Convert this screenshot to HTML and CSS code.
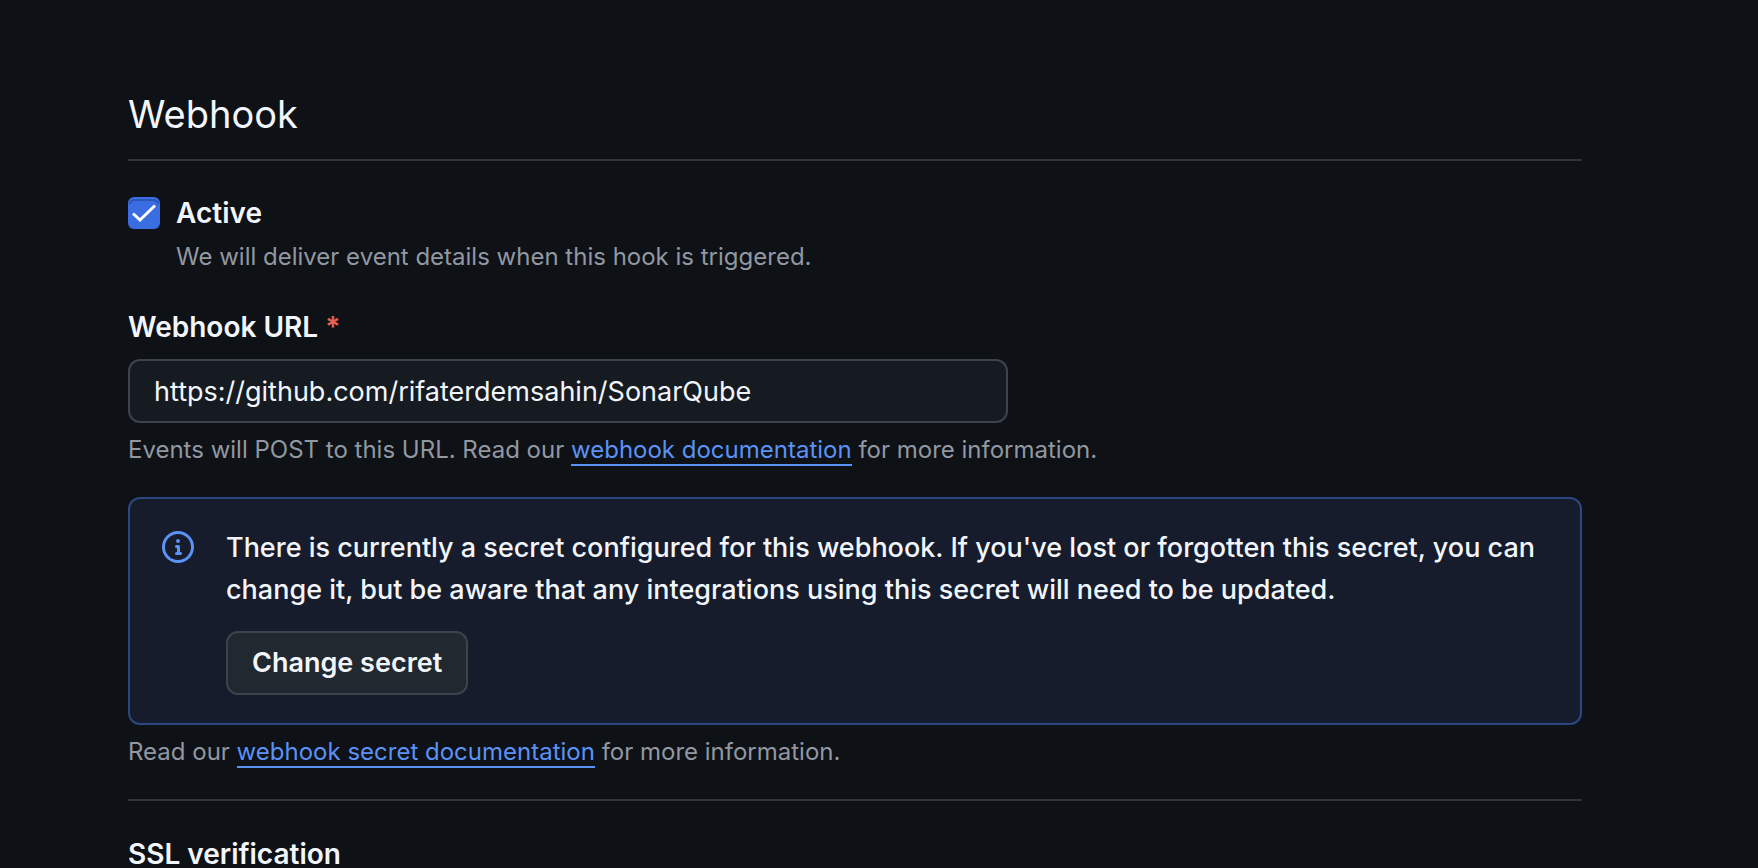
FILE: index.html
```html
<!DOCTYPE html>
<html lang="en">
<head>
<meta charset="utf-8">
<title>Webhook</title>
<link rel="stylesheet" href="styles.css">
</head>
<body>
<main class="settings">
  <h2 class="heading">Webhook</h2>
  <form class="form">
    <div class="check-row">
      <input class="checkbox" type="checkbox" id="active" checked aria-describedby="active-note">
      <div class="check-text">
        <label class="label" for="active">Active</label>
        <p class="note" id="active-note">We will deliver event details when this hook is triggered.</p>
      </div>
    </div>
    <div class="field">
      <label class="label" for="url">Webhook URL <span class="required">*</span></label>
      <input class="text-input" type="text" id="url" value="https://github.com/rifaterdemsahin/SonarQube" aria-describedby="url-note">
      <p class="note" id="url-note">Events will POST to this URL. Read our <a class="link" href="#">webhook documentation</a> for more information.</p>
    </div>
    <div class="secret">
      <div class="banner">
        <svg class="banner-icon" viewBox="0 0 16 16" aria-hidden="true"><path fill="currentColor" d="M0 8a8 8 0 1 1 16 0A8 8 0 0 1 0 8Zm8-6.500a6.500 6.500 0 1 0 0 13 6.500 6.500 0 0 0 0-13ZM6.500 7.750A.75.75 0 0 1 7.250 7h1a.75.75 0 0 1 .75.75v2.750h.25a.75.75 0 0 1 0 1.500h-2a.75.75 0 0 1 0-1.500h.25v-2h-.25a.75.75 0 0 1-.75-.75ZM8 6a1 1 0 1 1 0-2 1 1 0 0 1 0 2Z"/></svg>
        <div class="banner-body">
          <p class="banner-text">There is currently a secret configured for this webhook. If you've lost or forgotten this secret, you can change it, but be aware that any integrations using this secret will need to be updated.</p>
          <button class="button" type="button">Change secret</button>
        </div>
      </div>
      <p class="note">Read our <a class="link" href="#">webhook secret documentation</a> for more information.</p>
    </div>
    <section class="ssl">
      <h3 class="label">SSL verification</h3>
    </section>
  </form>
</main>
</body>
</html>
```
FILE: styles.css
```css
* {
  box-sizing: border-box;
}

html {
  background: #0e1116;
}

body {
  margin: 0;
  height: 100vh;
  overflow: hidden;
  color: #f2f6fc;
  font-family: Inter, "Noto Sans", sans-serif;
  font-size: 27px;
  line-height: 42px;
}

h2,
h3,
p {
  margin: 0;
}

.settings {
  padding: 84px 176px 0 128px;
}

.heading {
  padding-bottom: 15px;
  border-bottom: 2px solid #30353b;
  font-size: 38px;
  font-weight: 400;
  line-height: 60px;
}

.form {
  display: flex;
  flex-direction: column;
}

.check-row {
  display: flex;
  gap: 16px;
  margin-top: 32px;
}

.check-text,
.field {
  display: flex;
  flex-direction: column;
  align-items: flex-start;
}

.checkbox {
  appearance: none;
  flex: none;
  width: 32px;
  height: 32px;
  margin: 4px 0 0;
  border-radius: 6px;
  background: #3a6de2 url("data:image/svg+xml,%3Csvg xmlns='http://www.w3.org/2000/svg' viewBox='0 0 32 32'%3E%3Cpath d='M2 7Q2.500 3 7 3H25Q29.500 3 30 7' fill='none' stroke='%232c55b4' stroke-width='2'/%3E%3Cpath d='M5 16.500 12 23 27 8.500' fill='none' stroke='white' stroke-width='3'/%3E%3C/svg%3E") center / 100%;
}

.label {
  font-size: 28px;
  font-weight: 600;
  line-height: 40px;
}

.note {
  color: #9198a1;
  font-size: 24px;
  line-height: 36px;
}

.check-text .note {
  margin-top: 6px;
}

.field {
  margin-top: 32px;
}

.required {
  color: #ea6153;
}

.text-input {
  width: 880px;
  max-width: 100%;
  height: 64px;
  margin: 12px 0 9px;
  padding: 0 24px;
  border: 2px solid #3d434b;
  border-radius: 12px;
  background: #161b22;
  color: inherit;
  font: inherit;
}

.link {
  border-bottom: 2px solid #5a93f5;
  color: #5a93f5;
  text-decoration: none;
}

.secret {
  display: flex;
  flex-direction: column;
  gap: 9px;
  margin-top: 29px;
  padding-bottom: 29px;
  border-bottom: 2px solid #30353b;
}

.banner {
  display: flex;
  gap: 32px;
  padding: 28px 32px;
  border: 2px solid #2b4880;
  border-radius: 12px;
  background: #161c2b;
}

.banner-icon {
  flex: none;
  width: 32px;
  height: 32px;
  margin-top: 4px;
  color: #5a93f5;
}

.banner-body {
  display: flex;
  flex: 1;
  flex-direction: column;
  align-items: flex-start;
  gap: 20px;
}

.banner-text {
  font-weight: 500;
}

.button {
  height: 64px;
  padding: 0 24px;
  border: 2px solid #3d434a;
  border-radius: 12px;
  background: #22282f;
  color: inherit;
  font: inherit;
  font-weight: 600;
}

.ssl {
  margin-top: 33px;
}
```
